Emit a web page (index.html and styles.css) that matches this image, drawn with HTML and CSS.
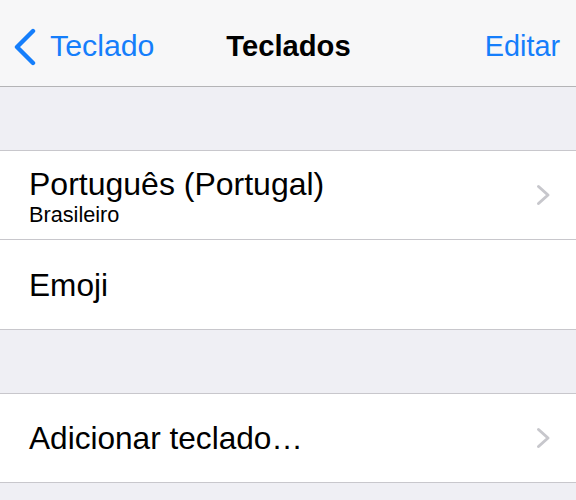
FILE: index.html
```html
<!DOCTYPE html>
<html lang="pt">
<head>
<meta charset="utf-8">
<title>Teclados</title>
<link rel="stylesheet" href="styles.css">
</head>
<body>
<div class="screen">
  <header class="nav">
    <a class="back">
      <svg class="back-icon" width="26" height="38" viewBox="0 0 26 38"><polyline points="20,3 4,19 20,35" fill="none" stroke="#157efb" stroke-width="4.4" stroke-linecap="round" stroke-linejoin="round"/></svg>
      <span class="back-label">Teclado</span>
    </a>
    <h1 class="title">Teclados</h1>
    <a class="edit">Editar</a>
  </header>

  <div class="gap"></div>
  <ul class="group">
    <li class="row row-sub">
      <div class="row-text">
        <div class="label">Português (Portugal)</div>
        <div class="sublabel">Brasileiro</div>
      </div>
      <svg class="chev" width="15" height="22" viewBox="0 0 15 22"><polyline points="2.5,2.5 12,11 2.5,19.5" fill="none" stroke="#c7c7cc" stroke-width="3" stroke-linecap="round" stroke-linejoin="round"/></svg>
    </li>
    <li class="row">
      <div class="label">Emoji</div>
    </li>
  </ul>

  <div class="gap"></div>
  <ul class="group">
    <li class="row">
      <div class="label">Adicionar teclado…</div>
      <svg class="chev" width="15" height="22" viewBox="0 0 15 22"><polyline points="2.5,2.5 12,11 2.5,19.5" fill="none" stroke="#c7c7cc" stroke-width="3" stroke-linecap="round" stroke-linejoin="round"/></svg>
    </li>
  </ul>
  <div class="gap"></div>
</div>
</body>
</html>
```

FILE: styles.css
```css
* { box-sizing: border-box; }
html, body {
  margin: 0;
  padding: 0;
  background: #efeff4;
  font-family: "Liberation Sans", Arial, Helvetica, sans-serif;
  color: #000;
}
.screen {
  width: 576px;
  height: 500px;
  overflow: hidden;
  background: #efeff4;
}
.nav {
  height: 87px;
  background: #f7f7f8;
  border-bottom: 1px solid #b4b4b6;
  display: grid;
  grid-template-columns: 1fr auto 1fr;
  align-items: start;
  padding: 29px 16px 0 13px;
}
.back {
  display: flex;
  align-items: flex-start;
  color: #157efb;
  font-size: 30.3px;
  line-height: 34px;
}
.back-icon {
  display: block;
  margin-top: -1px;
  margin-right: 11px;
}
.title {
  margin: 0 0 0 4px;
  font-size: 29.2px;
  font-weight: bold;
  line-height: 34px;
}
.edit {
  justify-self: end;
  color: #157efb;
  font-size: 28.8px;
  line-height: 34px;
}
.gap {
  height: 63px;
}
.group {
  list-style: none;
  margin: 0;
  padding: 0;
  background: #fff;
  border-top: 1px solid #c8c7cc;
  border-bottom: 1px solid #c8c7cc;
}
.row {
  height: 88px;
  display: flex;
  align-items: center;
  justify-content: space-between;
  padding: 0 25px 0 29px;
}
.row + .row {
  border-top: 1px solid #c8c7cc;
  height: 90px;
}
.row-text {
  display: flex;
  flex-direction: column;
  padding-top: 2px;
}
.label {
  font-size: 31.6px;
  line-height: 36px;
}
.row-sub .label {
  font-size: 32px;
}
.sublabel {
  font-size: 21.7px;
  line-height: 24px;
  margin-top: 1px;
}
.chev {
  display: block;
  flex: none;
}
```
